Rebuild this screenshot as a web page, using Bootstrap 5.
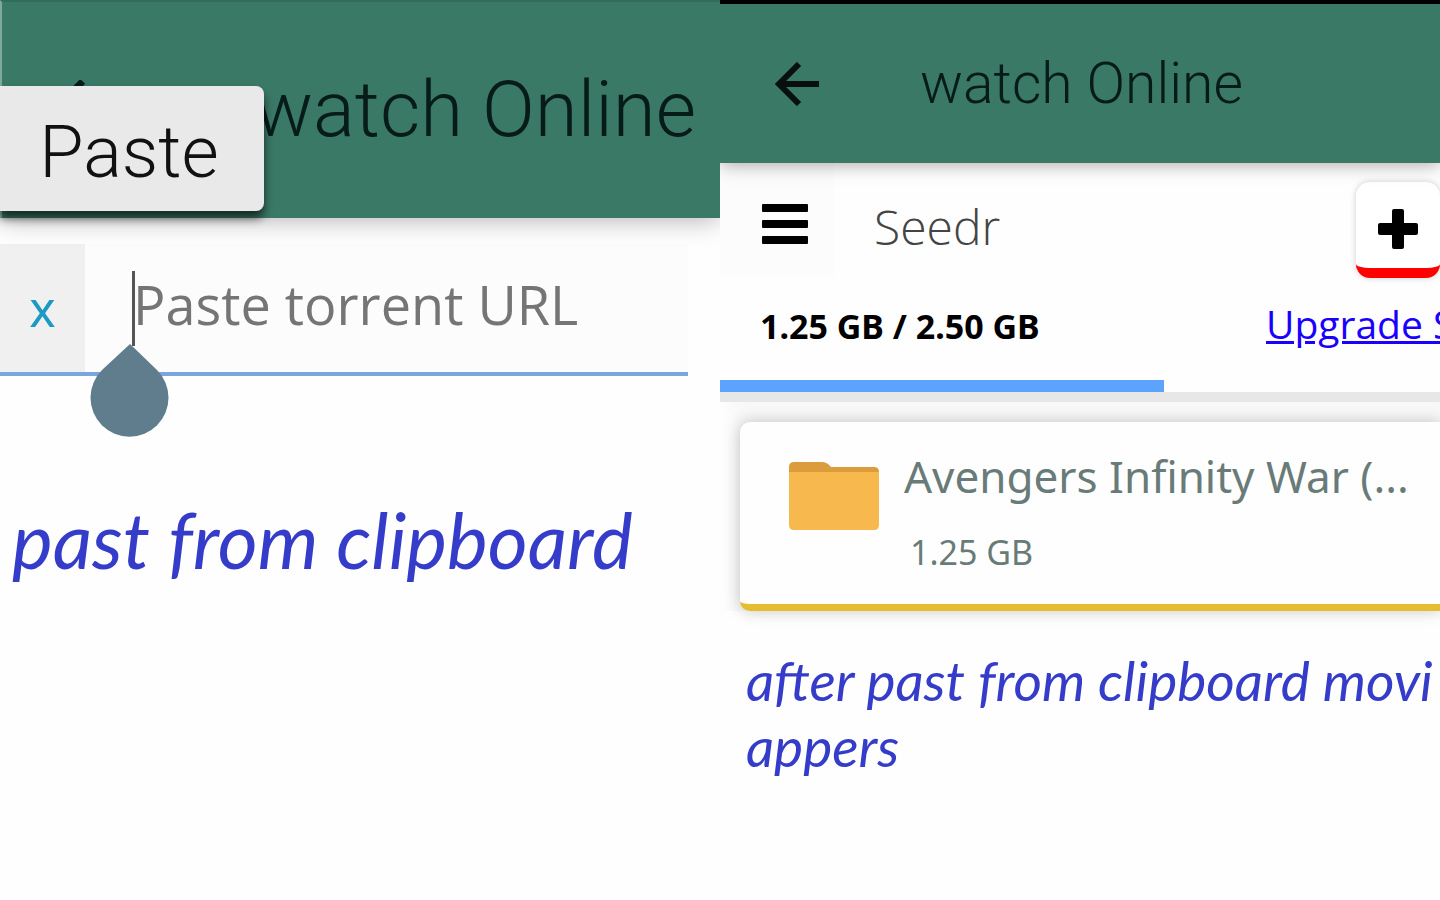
<!DOCTYPE html>
<html lang="en">
<head>
<meta charset="utf-8">
<meta name="viewport" content="width=device-width, initial-scale=1">
<title>watch Online</title>
<link href="https://cdn.jsdelivr.net/npm/bootstrap@5.3.0/dist/css/bootstrap.min.css" rel="stylesheet">
<style>
  body { font-family: "Noto Sans", sans-serif; background: #fefefe; color: #000; }
  .pane { min-width: 0; overflow: hidden; position: relative; }
  .appbar { background: #3b7967; font-family: Roboto, sans-serif; font-weight: 300; color: #071b19; position: relative; z-index: 1; }
  .appbar h1 { font-weight: 300; line-height: 1; white-space: nowrap; }
  .bar-large { height: 218px; border-left: 2px solid #7fa99c; border-top: 2px solid #336b5c; box-shadow: 0 2px 24px rgba(0,0,0,.3); padding: 0 24px 0 48px; }
  .bar-large h1 { font-size: 78px; }
  .bar-small { height: 163px; border-top: 4px solid #000; box-shadow: 0 1px 18px rgba(0,0,0,.36); padding: 0 48px; gap: 96px; }
  .bar-small h1 { font-size: 57px; }
  .plain-btn { background: none; border: 0; padding: 0; line-height: 1; color: #000; }
  .paste-pop { position: absolute; z-index: 2; top: 86px; left: 0; width: 264px; height: 125px; border: 0; border-radius: 0 8px 8px 0; background: #e9e9e9; color: #111; font: 300 72px/1 Roboto, sans-serif; padding: 8px 6px 0 0; box-shadow: 0 7px 10px rgba(0,0,0,.65); }
  .url-box { height: 132px; margin: 26px 32px 0 0; border-bottom: 4px solid #79a6dc; background: #fcfcfc; position: relative; }
  .clear-btn { width: 85px; background: #f0f0f0; color: #1c9ac4; font-size: 50px; }
  .url-box input { border: 0; background: none; width: 100%; min-width: 0; padding: 0 0 8px 48px; font-family: "Open Sans", sans-serif; font-size: 54px; outline: 0; }
  .url-box input::placeholder { color: #757575; opacity: 1; }
  .caret { position: absolute; left: 90px; top: 26px; }
  .hand { font-family: Lato, sans-serif; font-style: italic; color: #343cc9; white-space: nowrap; margin: 0; }
  .hand-large { font-size: 77px; line-height: 88px; padding: 119px 12px 0; }
  .hand-small { font-size: 55px; line-height: 66px; padding: 36px 26px 0; }
  .right-pane { background: #fefefe; }
  .drive-head { background: #fefefe; height: 229px; }
  .menu-btn { width: 114px; height: 114px; padding: 8px 0 0 16px; background: #fcfcfc; }
  .drive-name { font-family: "Open Sans", sans-serif; font-weight: 300; font-size: 48px; line-height: 64px; color: #444; }
  .add-wrap { padding-top: 19px; }
  .add-btn { width: 84px; height: 96px; flex: none; background: #fff; border: 0; border-bottom: 10px solid #f00; border-radius: 14px; box-shadow: 0 0 6px rgba(0,0,0,.2); }
  .quota { font-weight: 700; font-size: 34px; line-height: 48px; }
  .upgrade { width: 174px; white-space: nowrap; font-family: "Open Sans", sans-serif; font-size: 39px; line-height: 56px; color: #1a00ff; }
  .quota-row { margin-bottom: 20px; }
  .quota-bar { height: 12px; border-radius: 0; background: #fefefe; }
  .quota-bar .progress-bar { background: #5ba3fd; }
  .files { background: linear-gradient(90deg, #fefefe, #f8f8f8 20px); border-top: 10px solid #e7e7e7; padding: 20px 0 0 20px; }
  .file-card { height: 189px; background: #fefefe; border: 0; border-bottom: 7px solid #e6bd30; border-radius: 10px 0 0 10px; box-shadow: 0 0 16px rgba(0,0,0,.22); padding: 26px 24px 0 48px; gap: 24px; color: #697b78; }
  .file-icon { margin-top: 10px; }
  .file-name { font-size: 44px; line-height: 56px; }
  .file-size { font-size: 34px; line-height: 48px; margin-top: 24px; padding-left: 6px; }
</style>
</head>
<body>
<main class="container-fluid p-0">
  <div class="row g-0 min-vh-100">
    <section class="col-6 pane">
      <header class="appbar bar-large d-flex align-items-center justify-content-between">
        <button class="plain-btn" aria-label="Back"><svg width="60" height="60" viewBox="0 0 44 44" fill="none" stroke="#071b19" stroke-width="5"><path d="M24 1 3 22 24 43M3 22H44"/></svg></button>
        <h1 class="m-0">watch Online</h1>
      </header>
      <button class="paste-pop">Paste</button>
      <div class="url-box d-flex">
        <button class="plain-btn clear-btn flex-shrink-0" aria-label="Clear">x</button>
        <input type="text" aria-label="Torrent URL" placeholder="Paste torrent URL">
        <svg class="caret" width="80" height="168" viewBox="0 0 80 168" aria-hidden="true"><path d="M43.500 1V76" stroke="#555" stroke-width="3"/><path d="M40 74 67 100A39 39 0 1 1 12 100Z" fill="#5f7d8c"/></svg>
      </div>
      <p class="hand hand-large">past from clipboard</p>
    </section>
    <section class="col-6 pane right-pane">
      <header class="appbar bar-small d-flex align-items-center">
        <button class="plain-btn" aria-label="Back"><svg class="d-block" width="56" height="44" viewBox="-6 0 56 44" fill="none" stroke="#07100f" stroke-width="6"><path d="M25 2 5 22 25 42M5 22H45"/></svg></button>
        <h1 class="m-0">watch Online</h1>
      </header>
      <div class="drive-head d-flex flex-column">
        <div class="d-flex">
          <button class="plain-btn menu-btn" aria-label="Menu"><svg width="48" height="40" viewBox="0 0 48 40"><path d="M2 1h44v6H2zM2 17h44v6H2zM2 33h44v6H2z" stroke="#000" stroke-width="2" stroke-linejoin="round"/></svg></button>
          <div class="drive-name flex-grow-1 ps-4 ms-3 pt-3 mt-3">Seedr</div>
          <div class="add-wrap"><button class="add-btn" aria-label="Add"><svg class="mt-2" width="40" height="40" viewBox="0 0 40 40"><path d="M16 0h8q2 0 2 2v12h12q2 0 2 2v8q0 2-2 2H26v12q0 2-2 2h-8q-2 0-2-2V26H2q-2 0-2-2v-8q0-2 2-2h12V2q0-2 2-2z"/></svg></button></div>
        </div>
        <div class="quota-row d-flex justify-content-between align-items-center ps-4 mt-auto">
          <div class="quota ps-3 pt-1">1.25 GB / 2.50 GB</div>
          <a class="upgrade" href="#">Upgrade S</a>
        </div>
        <div class="progress quota-bar mt-2"><div class="progress-bar" role="progressbar" aria-label="Storage used" style="width:61.700%"></div></div>
      </div>
      <div class="files">
        <article class="card file-card d-flex flex-row">
          <svg class="file-icon flex-shrink-0" width="92" height="76" viewBox="0 0 92 76"><path d="M1 9Q1 4 6 4H34Q39 4 43 9H86Q91 9 91 14V30H1Z" fill="#dc9c3b"/><path d="M1 14H91V67Q91 72 86 72H6Q1 72 1 67Z" fill="#f7b84d"/></svg>
          <div><div class="file-name">Avengers Infinity War (...</div><div class="file-size">1.25 GB</div></div>
        </article>
      </div>
      <p class="hand hand-small">after past from clipboard movi<br>appers</p>
    </section>
  </div>
</main>
<script src="https://cdn.jsdelivr.net/npm/bootstrap@5.3.0/dist/js/bootstrap.bundle.min.js"></script>
</body>
</html>
